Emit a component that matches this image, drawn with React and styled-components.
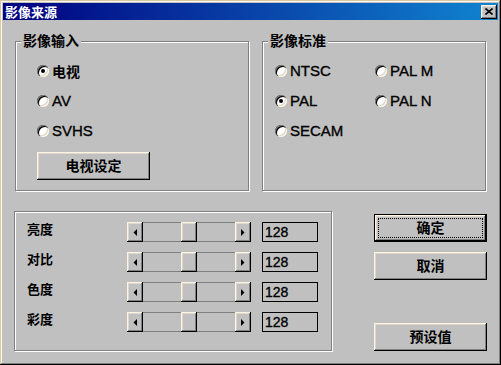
import React from "react";
import styled, { createGlobalStyle, css } from "styled-components";

const GlobalStyle = createGlobalStyle`
html, body {
  margin:0;
  padding:0;
  background:#c0c0c0;
}
* {
  box-sizing:border-box;
}
`

const cjk = `"Noto Sans CJK SC", "Liberation Sans", sans-serif`;
const latin = `"Liberation Sans", Arial, sans-serif`;

const raised = css`
background:#c0c0c0;
box-shadow: inset -1px -1px #000, inset 1px 1px #fff4e0, inset -2px -2px #808080, inset 2px 2px #dcd8d0;
`

const sliders = [
    { label: "亮度", value: 128 },
    { label: "对比", value: 128 },
    { label: "色度", value: 128 },
    { label: "彩度", value: 128 },
];

const ArrowIcon = ({ dir }) => (
    <svg width="4" height="7" viewBox="0 0 4 7">
        {dir === "left"
            ? <polygon points="4,0 4,7 0.5,3.5" fill="#000" />
            : <polygon points="0,0 0,7 3.5,3.5" fill="#000" />}
    </svg>
);

const ScrollBar = ({ value }) => {
    // track is 92px wide, thumb is 16px
    const offset = Math.round((92 - 16) * value / 255);
    return (
        <Scroll>
            <ArrowButton><ArrowIcon dir="left" /></ArrowButton>
            <Track>
                <Thumb style={{ marginLeft: offset }} />
            </Track>
            <ArrowButton><ArrowIcon dir="right" /></ArrowButton>
        </Scroll>
    );
};

const Radio = ({ checked, cjkText, children }) => (
    <RadioRow>
        <RadioCircle>{checked && <RadioDot />}</RadioCircle>
        <RadioText $cjk={cjkText}>{children}</RadioText>
    </RadioRow>
);

export default function App() {
    return (
        <>
            <GlobalStyle />
            <Window>
                <TitleBar>
                    <Title>影像来源</Title>
                    <CloseButton>
                        <svg width="8" height="7" viewBox="0 0 8 7">
                            <path d="M0.5 0.5 L7.5 6.5 M7.5 0.5 L0.5 6.5" stroke="#000" strokeWidth="1.6" />
                        </svg>
                    </CloseButton>
                </TitleBar>
                <Body>
                    <TopRow>
                        <Group $width={234} $height={150}>
                            <Legend>影像输入</Legend>
                            <RadioList>
                                <Radio checked cjkText>电视</Radio>
                                <Radio>AV</Radio>
                                <Radio>SVHS</Radio>
                            </RadioList>
                            <Button $width={113}>电视设定</Button>
                        </Group>
                        <Group $width={224} $height={150} $padLeft={12}>
                            <Legend>影像标准</Legend>
                            <RadioGrid>
                                <Radio>NTSC</Radio>
                                <Radio>PAL M</Radio>
                                <Radio checked>PAL</Radio>
                                <Radio>PAL N</Radio>
                                <Radio>SECAM</Radio>
                            </RadioGrid>
                        </Group>
                    </TopRow>
                    <BottomRow>
                        <Group $width={318} $height={140} $padLeft={12} $padTop={10}>
                            <SliderList>
                                {sliders.map(s => (
                                    <SliderRow key={s.label}>
                                        <SliderLabel>{s.label}</SliderLabel>
                                        <ScrollBar value={s.value} />
                                        <ValueBox>{s.value}</ValueBox>
                                    </SliderRow>
                                ))}
                            </SliderList>
                        </Group>
                        <ButtonColumn>
                            <Button $width={113} $default>确定</Button>
                            <Button $width={113}>取消</Button>
                            <Button $width={113} $bottom>预设值</Button>
                        </ButtonColumn>
                    </BottomRow>
                </Body>
            </Window>
        </>
    );
}

const Window = styled.div`
width:501px;
height:365px;
padding:3px;
background:#c0c0c0;
box-shadow: inset -1px -1px #000, inset 1px 1px #d8c8a4, inset -2px -2px #808080, inset 2px 2px #fff8ec;
display:flex;
flex-direction:column;
`

const TitleBar = styled.div`
height:17px;
display:flex;
align-items:center;
justify-content:space-between;
padding:0 1px 0 2px;
background:linear-gradient(to right, #000080, #1084d0);
`

const Title = styled.span`
color:#fff;
font-family:${cjk};
font-weight:700;
font-size:13px;
line-height:13px;
`

const CloseButton = styled.div`
${raised}
width:16px;
height:14px;
display:flex;
align-items:center;
justify-content:center;
padding-bottom:1px;
`

const Body = styled.div`
flex:1;
padding:21px 0 0 12px;
display:flex;
flex-direction:column;
`

const TopRow = styled.div`
display:flex;
gap:13px;
`

const BottomRow = styled.div`
display:flex;
gap:42px;
margin-top:20px;
margin-left:-1px;
`

const Group = styled.div`
position:relative;
width:${p => p.$width}px;
height:${p => p.$height}px;
border:1px solid #808080;
box-shadow: 1px 1px 0 #fff, inset 1px 1px 0 #fff;
padding:${p => p.$padTop ?? 19}px 0 0 ${p => p.$padLeft ?? 21}px;
`

const Legend = styled.span`
position:absolute;
top:-9px;
left:5px;
padding:0 2px;
background:#c0c0c0;
font-family:${cjk};
font-weight:700;
font-size:14px;
line-height:14px;
color:#000;
`

const RadioList = styled.div`
display:flex;
flex-direction:column;
gap:10px;
`

const RadioGrid = styled.div`
display:grid;
grid-template-columns:100px 100px;
grid-auto-rows:20px;
row-gap:10px;
`

const RadioRow = styled.div`
height:20px;
display:flex;
align-items:center;
gap:3px;
`

const RadioCircle = styled.span`
width:12px;
height:12px;
border-radius:50%;
background:#fff;
box-shadow: inset 1px 1px #808080, inset 2px 2px #000, inset -1px -1px #fff4e0, inset -2px -2px #dcd8d0;
display:flex;
align-items:center;
justify-content:center;
flex:none;
`

const RadioDot = styled.span`
width:4px;
height:4px;
border-radius:50%;
background:#000;
`

const RadioText = styled.span`
font-family:${p => p.$cjk ? cjk : latin};
font-weight:${p => p.$cjk ? 700 : 400};
font-size:${p => p.$cjk ? 14 : 15}px;
color:#000;
line-height:16px;
-webkit-text-stroke:${p => p.$cjk ? 0 : 0.35}px #000;
`

const Button = styled.div`
${raised}
width:${p => p.$width}px;
height:28px;
margin-top:${p => p.$bottom ? "auto" : "0"};
display:flex;
align-items:center;
justify-content:center;
padding-bottom:3px;
font-family:${cjk};
font-weight:700;
font-size:14px;
color:#000;
${p => p.$default && css`
  border:1px solid #000;
  box-shadow: inset -1px -1px #000, inset 1px 1px #fff4e0, inset -2px -2px #808080, inset 2px 2px #dcd8d0;
  outline:1px dotted #000;
  outline-offset:-5px;
`}
${RadioList} + & {
  margin-top:11px;
}
`

const ButtonColumn = styled.div`
display:flex;
flex-direction:column;
gap:10px;
padding-top:3px;
`

const SliderList = styled.div`
display:flex;
flex-direction:column;
gap:10px;
`

const SliderRow = styled.div`
display:flex;
height:20px;
`

const SliderLabel = styled.span`
width:100px;
font-family:${cjk};
font-weight:700;
font-size:13px;
line-height:13px;
color:#000;
`

const Scroll = styled.div`
width:124px;
height:20px;
display:flex;
`

const ArrowButton = styled.div`
${raised}
width:16px;
height:20px;
display:flex;
align-items:center;
justify-content:center;
flex:none;
`

const Track = styled.div`
flex:1;
display:flex;
border-top:1px solid #808080;
border-bottom:1px solid #808080;
background:#c0c0c0;
`

const Thumb = styled.div`
${raised}
width:16px;
margin-top:-1px;
margin-bottom:-1px;
`

const ValueBox = styled.div`
width:56px;
height:20px;
margin-left:11px;
border:1px solid #000;
padding-left:2px;
font-family:${latin};
font-size:14px;
line-height:18px;
color:#000;
-webkit-text-stroke:0.35px #000;
`
